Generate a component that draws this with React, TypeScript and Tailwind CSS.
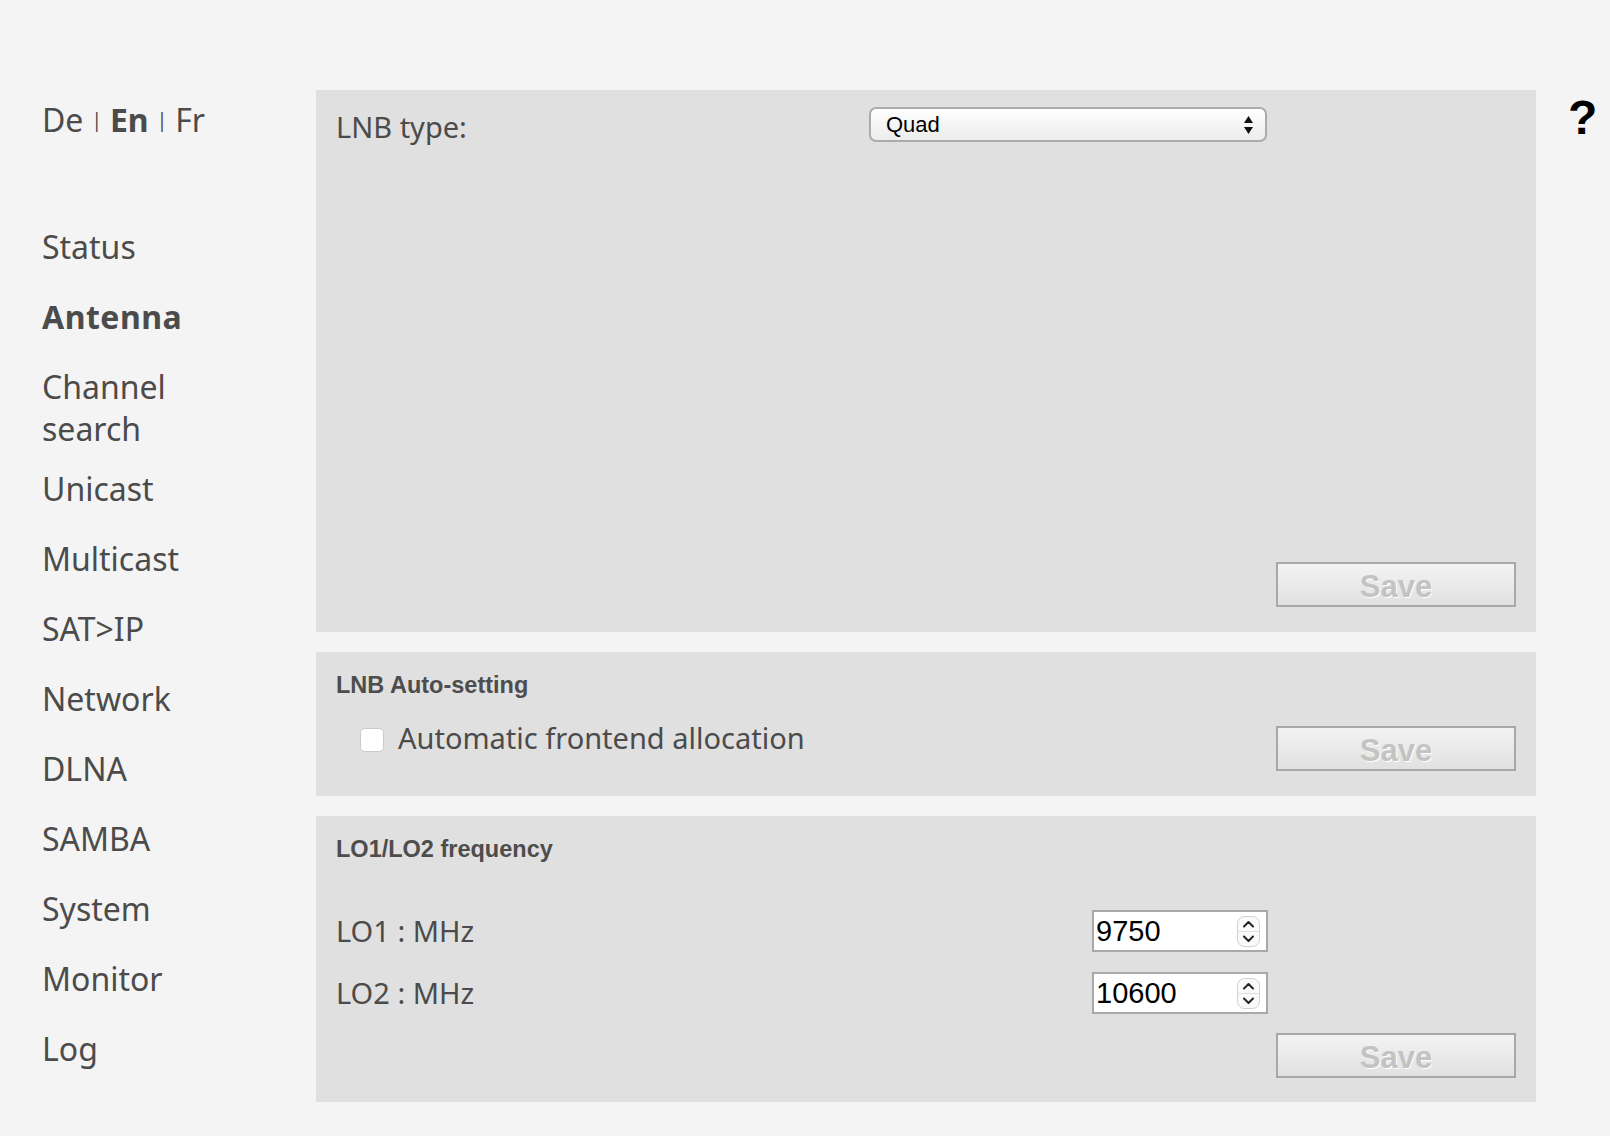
import React from 'react';

const navItems = [
  { label: 'Status' },
  { label: 'Antenna', active: true },
  { label: 'Channel search', wrap: true },
  { label: 'Unicast' },
  { label: 'Multicast' },
  { label: 'SAT>IP' },
  { label: 'Network' },
  { label: 'DLNA' },
  { label: 'SAMBA' },
  { label: 'System' },
  { label: 'Monitor' },
  { label: 'Log' },
];

function SaveButton() {
  return (
    <button
      disabled
      className="h-[45px] w-[240px] border-2 border-[#a8a8a8] bg-linear-to-b from-[#f3f3f3] to-[#e1e1e1] pt-[3px] font-['Liberation_Sans',Arial,sans-serif] text-[31px] font-bold leading-none text-[#c3c3c3] [text-shadow:1px_1px_0_#ffffff]"
    >
      Save
    </button>
  );
}

function Spinner() {
  return (
    <svg width="23" height="31" viewBox="0 0 23 31" className="shrink-0">
      <rect x="0.5" y="0.5" width="22" height="30" rx="7" fill="#fafafa" stroke="#d0d0d0" />
      <line x1="1" y1="15.5" x2="22" y2="15.5" stroke="#e0e0e0" />
      <path d="M7 10.5 L11.5 6 L16 10.5" fill="none" stroke="#222" strokeWidth="2" strokeLinecap="round" strokeLinejoin="round" />
      <path d="M7 20.5 L11.5 25 L16 20.5" fill="none" stroke="#222" strokeWidth="2" strokeLinecap="round" strokeLinejoin="round" />
    </svg>
  );
}

function NumberField({ value }: { value: string }) {
  return (
    <div className="flex h-[42px] w-[176px] items-center justify-between border-2 border-[#a9a9a9] bg-white pl-[2px] pr-[6px]">
      <span className="font-['Liberation_Sans',Arial,sans-serif] text-[29px] leading-none text-black">{value}</span>
      <Spinner />
    </div>
  );
}

export default function App() {
  return (
    <div className="min-h-screen bg-[#f4f4f4] font-['Noto_Sans',sans-serif] text-[#4b4b4b]">
      <div className="flex pb-[35px] pt-[90px]">
        {/* left navigation */}
        <nav className="w-[316px] shrink-0 pl-[42px] pt-[9px]">
          <div className="text-[32px] leading-[42px]">
            De<span className="mx-[8px] align-[5px] text-[19px]">|</span>
            <span className="font-bold">En</span>
            <span className="mx-[8px] align-[5px] text-[19px]">|</span>Fr
          </div>
          <ul className="mt-[85px]">
            {navItems.map((item) => (
              <li
                key={item.label}
                className={`w-[150px] text-[32px] leading-[42px] ${item.active ? 'font-bold tracking-[0.5px]' : ''} ${item.wrap ? 'mb-[18px]' : 'mb-[28px]'}`}
              >
                {item.label}
              </li>
            ))}
          </ul>
        </nav>

        {/* main panels */}
        <main className="flex w-[1220px] shrink-0 flex-col gap-[20px]">
          <section className="flex h-[542px] flex-col justify-between bg-[#e0e0e0] px-[20px] pb-[25px] pt-[17px]">
            <div className="flex h-[34px] items-start">
              <label className="w-[533px] pt-[3px] text-[29px] leading-[34px]">LNB type:</label>
              <div className="flex h-[35px] w-[398px] items-center justify-between rounded-[7px] border-2 border-[#ababab] bg-linear-to-b from-white to-[#ececec] pl-[15px] pr-[11px]">
                <span className="font-['Liberation_Sans',Arial,sans-serif] text-[22px] leading-none text-black">Quad</span>
                <svg width="11" height="20" viewBox="0 0 11 20">
                  <path d="M5.5 1 L10 8 L1 8 Z" fill="#111" />
                  <path d="M5.5 19 L10 12 L1 12 Z" fill="#111" />
                </svg>
              </div>
            </div>
            <div className="flex justify-end">
              <SaveButton />
            </div>
          </section>

          <section className="h-[144px] bg-[#e0e0e0] px-[20px] pt-[20px]">
            <h2 className="font-['Liberation_Sans',Arial,sans-serif] text-[23.5px] font-bold leading-[26px] text-[#4d4d4d]">
              LNB Auto-setting
            </h2>
            <div className="flex items-start justify-between">
              <label className="ml-[24px] mt-[23px] flex items-center gap-[14px] text-[29px] leading-[34px]">
                <span className="mt-[3px] block h-[24px] w-[24px] rounded-[5px] border border-[#cacaca] bg-white" />
                Automatic frontend allocation
              </label>
              <div className="mt-[28px]">
                <SaveButton />
              </div>
            </div>
          </section>

          <section className="bg-[#e0e0e0] px-[20px] pb-[24px] pt-[20px]">
            <h2 className="font-['Liberation_Sans',Arial,sans-serif] text-[23.5px] font-bold leading-[26px] text-[#4d4d4d]">
              LO1/LO2 frequency
            </h2>
            <div className="mr-[248px] mt-[48px] flex flex-col gap-[20px]">
              <div className="flex h-[42px] items-center justify-between">
                <span className="text-[29px] leading-[34px]">LO1 : MHz</span>
                <NumberField value="9750" />
              </div>
              <div className="flex h-[42px] items-center justify-between">
                <span className="text-[29px] leading-[34px]">LO2 : MHz</span>
                <NumberField value="10600" />
              </div>
            </div>
            <div className="mt-[19px] flex justify-end">
              <SaveButton />
            </div>
          </section>
        </main>

        {/* help */}
        <div className="pl-[32px] pt-[4px] font-['Liberation_Sans',Arial,sans-serif] text-[48px] font-bold leading-[48px] text-black">
          ?
        </div>
      </div>
    </div>
  );
}
